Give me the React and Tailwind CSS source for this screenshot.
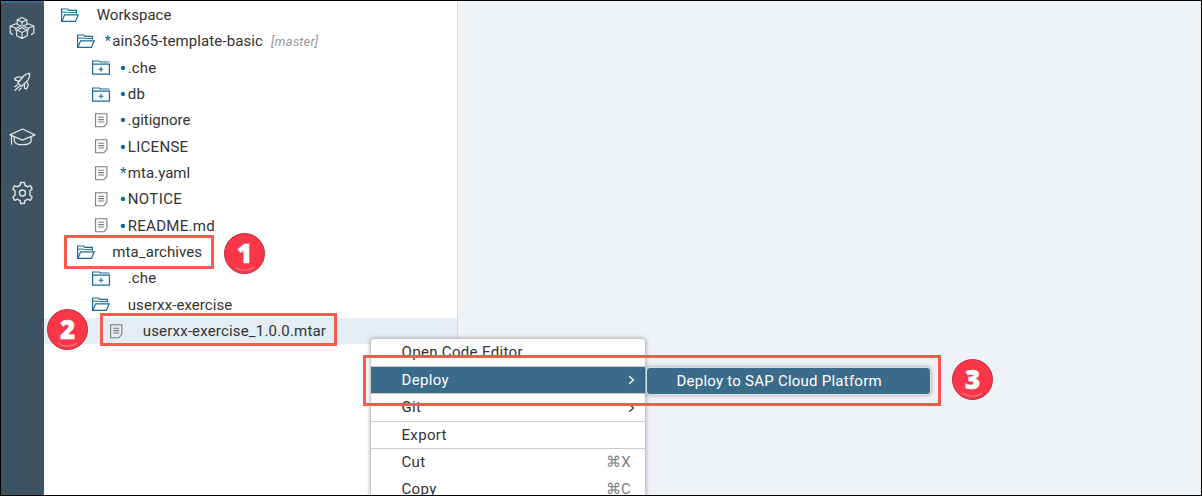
import React from 'react';

function OpenFolder() {
  return (
    <svg width="18" height="15" viewBox="0 0 18 15" fill="none" stroke="#1b6a96" strokeWidth="1.2">
      <path d="M0.6 13.4V1h6.2l1 1.4h7.6v3.2" />
      <path d="M0.8 13.4 3.6 6.8h13.6l-2.8 6.6z" />
      <path d="M0.6 4.1h6.2l1 .5h7.6" strokeWidth="1" />
    </svg>
  );
}

function ClosedFolder() {
  return (
    <svg width="18" height="15" viewBox="0 0 18 15" fill="none" stroke="#1b6a96" strokeWidth="1.2">
      <path d="M0.6 14.2V4.2h16.8v10H0.6z" />
      <path d="M0.6 4.2V1h6.6l1.2 1h9" />
      <path d="M9 6.8v5M6.5 9.3h5" strokeWidth="1.1" />
    </svg>
  );
}

function FileIcon() {
  return (
    <svg width="13" height="15" viewBox="0 0 13 15" fill="none" stroke="#7c7c7c" strokeWidth="1.1">
      <path d="M0.6 0.8h11.3v9.6l-3 3.3H0.6z" />
      <path d="M3.2 4.2h6M3.2 6.6h6M3.2 9h6" />
    </svg>
  );
}

const ROWS = [
  { pad: 'pl-[17px]', icon: 'open', label: 'Workspace', track: 'tracking-[0.03px]' },
  { pad: 'pl-[32.5px]', icon: 'open', mark: '*', label: 'ain365-template-basic', track: 'tracking-[0.1px]', note: '[master]' },
  { pad: 'pl-[48px]', icon: 'closed', mark: '•', label: '.che', track: 'tracking-[0.15px]' },
  { pad: 'pl-[48px]', icon: 'closed', mark: '•', label: 'db', track: 'tracking-[0.3px]' },
  { pad: 'pl-[48px]', icon: 'file', mark: '•', label: '.gitignore', track: 'tracking-[0px]' },
  { pad: 'pl-[48px]', icon: 'file', mark: '•', label: 'LICENSE', track: 'tracking-[0.3px]' },
  { pad: 'pl-[48px]', icon: 'file', mark: '*', label: 'mta.yaml', track: 'tracking-[0.05px]' },
  { pad: 'pl-[48px]', icon: 'file', mark: '•', label: 'NOTICE', track: 'tracking-[0.4px]' },
  { pad: 'pl-[48px]', icon: 'file', mark: '•', label: 'README.md', track: 'tracking-[0.3px]' },
  { pad: 'pl-[32.5px]', icon: 'open', label: 'mta_archives', track: 'tracking-[0.1px]' },
  { pad: 'pl-[48px]', icon: 'closed', label: '.che', track: 'tracking-[0.15px]' },
  { pad: 'pl-[48px]', icon: 'open', label: 'userxx-exercise', track: 'tracking-[0.08px]' },
  { pad: 'pl-[63px]', icon: 'file', label: 'userxx-exercise_1.0.0.mtar', track: 'tracking-[0.18px]', selected: true },
];

function Mark({ kind }) {
  return (
    <span className="flex w-[7.75px] shrink-0 items-center text-[15px] leading-[20px] text-[#0a6496]">
      {kind === '•' ? <span className="-ml-[0.5px] w-[7px] text-[20px]">•</span> : kind}
    </span>
  );
}

function TreeRow({ row }) {
  return (
    <div className={`flex h-[26.33px] shrink-0 items-center ${row.pad} ${row.selected ? 'bg-[#e5edf5]' : ''}`}>
      <span className={`flex w-[28px] shrink-0 ${row.icon === 'file' ? 'pl-[3px]' : ''}`}>
        {row.icon === 'open' && <OpenFolder />}
        {row.icon === 'closed' && <ClosedFolder />}
        {row.icon === 'file' && <FileIcon />}
      </span>
      <Mark kind={row.mark} />
      <span className={`whitespace-nowrap text-[15px] leading-[20px] text-[#333333] ${row.track}`}>{row.label}</span>
      {row.note && <span className="ml-[8px] text-[13px] italic tracking-[0.15px] text-[#999999]">{row.note}</span>}
    </div>
  );
}

function Sidebar() {
  return (
    <div className="flex w-[43px] shrink-0 flex-col items-center border-t-2 border-[#3c6c94] bg-[#3e5361]">
      <svg className="mt-[13px] -ml-px shrink-0" width="26" height="24" viewBox="0 0 26 24" fill="none" stroke="#dfe5ea" strokeWidth="1.2" strokeLinejoin="round" strokeLinecap="round">
        <path d="M13 1.5l4.8 2.3L13 6.1 8.2 3.800zM8.2 3.8V7.5M17.8 3.8V7.5M13 6.1V9.5" />
        <path d="M6.8 7.8l5.2 2.2-5.2 2.2L1.2 10zM1.2 10v6.8l2.2 1.7M6.8 12.2v2" />
        <path d="M19.2 7.8L14 10l5.2 2.2 5.6-2.2zM24.8 10v6.8l-2.2 1.7M19.2 12.2v2" />
        <path d="M13 11.6l5.3 2.4v5.8L13 22.4l-5.3-2.6V14zM7.7 14l5.3 2.5 5.3-2.5M13 16.5v5.9" />
      </svg>
      <svg className="mt-[32px] -ml-px shrink-0" width="18" height="20" viewBox="0 0 18 20" fill="none" stroke="#dfe5ea" strokeWidth="1.3" strokeLinejoin="round" strokeLinecap="round">
        <path d="M16.6 1.4c-2.4-.2-4.2.8-5.9 2.6L4.8 11l3.6 3.5 6.500-6.400c1.500-1.900 2-4.200 1.700-6.700z" />
        <path d="M9.500 5.300L5 4.800 1.600 6.600l.8 1.600 3.400.9M13.600 9.500l1.800 3.500-2 4-2-.8.200-3.600" />
        <path d="M4.200 13l-2.400 1.700M6 14.600l-4 3.600M8 16.200l-1.900 2" />
      </svg>
      <svg className="mt-[36px] shrink-0" width="27" height="18" viewBox="0 0 27 18" fill="none" stroke="#dfe5ea" strokeWidth="1.3" strokeLinejoin="round" strokeLinecap="round">
        <path d="M1 6.8L13.5 1 26 6.8 13.5 12.200z" />
        <path d="M2.5 7.6v8.600M5.300 9.200v4.200c2 4.400 15 4.400 16.800-.2V9" />
      </svg>
      <svg className="mt-[35px] shrink-0" width="23" height="24" viewBox="0 0 22 24" fill="none" stroke="#dfe5ea" strokeWidth="1.4" strokeLinejoin="round">
        <path d="M9.200 1.500h3.600l.7 3c.9.300 1.700.7 2.400 1.300l2.900-1.100 1.800 3.200-2.200 2.200c.2 1.200.2 2.600 0 3.800l2.200 2.200-1.800 3.200-2.900-1.100c-.7.600-1.500 1-2.400 1.300l-.7 3H9.200l-.7-3c-.9-.3-1.700-.7-2.400-1.300l-2.900 1.100-1.800-3.200 2.200-2.200c-.2-1.200-.2-2.600 0-3.800L1.400 7.900l1.800-3.200 2.900 1.100c.7-.6 1.500-1 2.400-1.300z" />
        <circle cx="11" cy="12" r="3" />
      </svg>
    </div>
  );
}

function Chevron() {
  return (
    <svg width="7" height="10" viewBox="0 0 7 10" fill="none" stroke="currentColor" strokeWidth="1.2">
      <path d="M1.2 1.2L5.5 5 1.2 8.8" />
    </svg>
  );
}

function MenuItem({ label, shortcut, submenu, className = '' }) {
  return (
    <div className={`flex shrink-0 items-center justify-between pl-[30.5px] text-[15px] tracking-[0.33px] ${submenu ? 'pr-[10px]' : 'pr-[14px]'} ${className}`}>
      <span>{label}</span>
      {submenu && <Chevron />}
      {shortcut && <span className="text-[#808080]">{shortcut}</span>}
    </div>
  );
}

function Badge({ n, className }) {
  return (
    <div className={`absolute flex size-[41px] items-center justify-center rounded-full border border-[#b92f3e] bg-[#fb3648] ${className}`}>
      <span className="-mt-[2px] font-['Open_Sans',sans-serif] text-[26px] font-extrabold leading-none text-white [-webkit-text-stroke:0.5px_white]">{n}</span>
      <svg className="absolute bottom-[1px] left-[9px]" width="21" height="6" viewBox="0 0 21 6" fill="none" stroke="#ff7380" strokeWidth="1.2">
        <path d="M1 1c5 4.200 14 4.200 19 0" />
      </svg>
    </div>
  );
}

export default function App() {
  return (
    <div className="relative flex h-[496px] w-[1202px] overflow-hidden border border-black bg-[#eff3f8] font-[Roboto,sans-serif]">
      <Sidebar />
      <div className="flex w-[414px] shrink-0 flex-col border-r border-[#d9dde2] bg-white pt-[1px]">
        {ROWS.map((row, i) => <TreeRow key={i} row={row} />)}
      </div>

      <div className="absolute left-[369px] top-[337px] flex h-[200px] w-[276px] flex-col rounded-[4px] border border-[#c4c8cc] bg-white text-[#333333] shadow-[0_0_4px_rgba(0,0,0,0.3)]">
        <MenuItem label="Open Code Editor" className="h-[27px]" />
        <MenuItem label="Deploy" submenu className="h-[28px] border-y border-[#c8ccd0] bg-[#3b6b8b] text-white" />
        <MenuItem label="Git" submenu className="h-[27px]" />
        <MenuItem label="Export" className="h-[28px] border-y border-[#cccccc]" />
        <MenuItem label="Cut" shortcut="⌘X" className="h-[27px]" />
        <MenuItem label="Copy" shortcut="⌘C" className="h-[27px]" />
      </div>
      <div className="absolute left-[645px] top-[366px] flex h-[28px] w-[285px] items-center rounded-[4px] border border-[#dce1e5] bg-[#3b6b8b] pl-[29.5px] text-[15px] tracking-[0.24px] text-white shadow-[0_0_4px_rgba(0,0,0,0.35)]">
        Deploy to SAP Cloud Platform
      </div>

      <div className="absolute left-[63px] top-[234px] h-[34px] w-[150px] border-[3px] border-[#fb5850]" />
      <div className="absolute left-[99px] top-[312px] h-[33px] w-[237px] border-[3px] border-[#fb5850]" />
      <div className="absolute left-[362px] top-[354px] h-[51px] w-[578px] border-[3px] border-[#fb5850]" />
      <Badge n="1" className="left-[223px] top-[232px]" />
      <Badge n="2" className="left-[46px] top-[308px]" />
      <Badge n="3" className="left-[951px] top-[358px]" />
    </div>
  );
}
